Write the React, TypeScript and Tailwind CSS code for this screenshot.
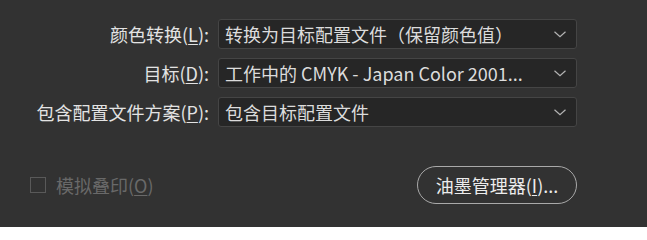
const FONT = { fontFamily: '"Noto Sans CJK SC", "Microsoft YaHei", sans-serif' };

const ROWS = [
  { label: '颜色转换', key: 'L', value: '转换为目标配置文件（保留颜色值）' },
  { label: '目标', key: 'D', value: '工作中的 CMYK - Japan Color 2001...' },
  { label: '包含配置文件方案', key: 'P', value: '包含目标配置文件' },
];

function Mnemonic({ k }: { k: string }) {
  return (
    <span>
      (<span className="underline underline-offset-2 decoration-1">{k}</span>)
    </span>
  );
}

function Chevron() {
  return (
    <svg width="12" height="7" viewBox="0 0 12 7" fill="none" className="shrink-0">
      <polyline points="0.5,0.8 6,5.8 11.5,0.8" stroke="#b4b4b4" strokeWidth="1.2" />
    </svg>
  );
}

export default function App() {
  return (
    <div className="h-[227px] w-[647px] bg-[#323232] text-[18px] text-[#e3e3e3]" style={FONT}>
      <div className="grid grid-cols-[209px_359px] gap-x-[9px] gap-y-[9px] pt-[19px]">
        {ROWS.map((r) => (
          <div key={r.key} className="contents">
            <div className="flex h-[30px] items-center justify-end whitespace-nowrap">
              {r.label}
              <Mnemonic k={r.key} />:
            </div>
            <div className="flex h-[30px] items-center justify-between rounded-[3px] border border-[#454545] bg-[#262626] pl-[6px] pr-[10px] text-[#dcdcdc]">
              <span className="whitespace-nowrap">{r.value}</span>
              <Chevron />
            </div>
          </div>
        ))}
      </div>

      <div className="mt-[39px] flex w-[577px] items-center justify-between pl-[30px]">
        <div className="flex items-center gap-[10px] text-[#696969]">
          <div className="h-[16px] w-[16px] border border-[#595959]" />
          <span className="whitespace-nowrap">
            模拟叠印<Mnemonic k="O" />
          </span>
        </div>
        <button className="flex h-[38px] w-[160px] items-center justify-center rounded-full border border-[#a9a9a9] text-[#ececec]">
          油墨管理器<Mnemonic k="I" />...
        </button>
      </div>
    </div>
  );
}
